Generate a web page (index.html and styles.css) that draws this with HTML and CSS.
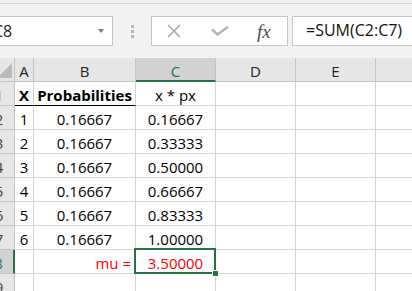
FILE: index.html
```html
<!DOCTYPE html>
<html lang="en">
<head>
    <meta charset="UTF-8">
    <meta name="viewport" content="width=device-width, initial-scale=1.0">
    <title>Book1 - Excel</title>
    <link rel="stylesheet" href="styles.css">
</head>
<body>

<div class="app">
    <div class="ribbon-edge"></div>

    <div class="formula-bar">
        <div class="name-box">
            <span class="name-text">C8</span>
            <span class="caret"></span>
        </div>
        <div class="grip">
            <span></span>
            <span></span>
            <span></span>
        </div>
        <div class="fx-buttons">
            <svg class="btn-icon" width="16" height="14" viewBox="0 0 16 14">
                <path d="M2 1 L14 13 M14 1 L2 13" stroke="#a9a9a9" stroke-width="1.6" fill="none"/>
            </svg>
            <svg class="btn-icon" width="18" height="10" viewBox="0 0 18 10">
                <path d="M1 3.5 L6.5 8.5 L17 0.8" stroke="#b3b3b3" stroke-width="2.4" fill="none"/>
            </svg>
            <span class="fx">fx</span>
        </div>
        <div class="formula-input">=SUM(C2:C7)</div>
    </div>

    <div class="sheet">
        <div class="corner"><span class="corner-tri"></span></div>
        <div class="col-head">A</div>
        <div class="col-head">B</div>
        <div class="col-head active">C</div>
        <div class="col-head">D</div>
        <div class="col-head">E</div>
        <div class="col-head"></div>

        <div class="row-head">1</div>
        <div class="cell bold title">X</div>
        <div class="cell bold title">Probabilities</div>
        <div class="cell">x * px</div>
        <div class="cell"></div>
        <div class="cell"></div>
        <div class="cell"></div>

        <div class="row-head">2</div>
        <div class="cell">1</div>
        <div class="cell">0.16667</div>
        <div class="cell">0.16667</div>
        <div class="cell"></div>
        <div class="cell"></div>
        <div class="cell"></div>

        <div class="row-head">3</div>
        <div class="cell">2</div>
        <div class="cell">0.16667</div>
        <div class="cell">0.33333</div>
        <div class="cell"></div>
        <div class="cell"></div>
        <div class="cell"></div>

        <div class="row-head">4</div>
        <div class="cell">3</div>
        <div class="cell">0.16667</div>
        <div class="cell">0.50000</div>
        <div class="cell"></div>
        <div class="cell"></div>
        <div class="cell"></div>

        <div class="row-head">5</div>
        <div class="cell">4</div>
        <div class="cell">0.16667</div>
        <div class="cell">0.66667</div>
        <div class="cell"></div>
        <div class="cell"></div>
        <div class="cell"></div>

        <div class="row-head">6</div>
        <div class="cell">5</div>
        <div class="cell">0.16667</div>
        <div class="cell">0.83333</div>
        <div class="cell"></div>
        <div class="cell"></div>
        <div class="cell"></div>

        <div class="row-head">7</div>
        <div class="cell">6</div>
        <div class="cell">0.16667</div>
        <div class="cell">1.00000</div>
        <div class="cell"></div>
        <div class="cell"></div>
        <div class="cell"></div>

        <div class="row-head active">8</div>
        <div class="cell"></div>
        <div class="cell red right">mu =</div>
        <div class="cell red selected">3.50000</div>
        <div class="cell"></div>
        <div class="cell"></div>
        <div class="cell"></div>

        <div class="row-head">9</div>
        <div class="cell"></div>
        <div class="cell"></div>
        <div class="cell"></div>
        <div class="cell"></div>
        <div class="cell"></div>
        <div class="cell"></div>
    </div>
</div>

</body>
</html>
```

FILE: styles.css
```css
body {
    margin: 0;
    font-family: "Open Sans", Arial, sans-serif;
    background: #fff;
}
.app {
    width: 412px;
    height: 291px;
    overflow: hidden;
    background: #f3f3f3;
}
.ribbon-edge {
    height: 3px;
    border-bottom: 1px solid #d6d6d6;
}

/* formula bar */
.formula-bar {
    display: flex;
    align-items: center;
    height: 30px;
    margin-top: 12px;
    margin-bottom: 12px;
}
.name-box {
    box-sizing: border-box;
    width: 127px;
    height: 30px;
    margin-left: -14px;
    padding: 0 8px 0 6px;
    background: #fff;
    border: 1px solid #c6c6c6;
    display: flex;
    align-items: center;
    justify-content: space-between;
    font-size: 16px;
    color: #222;
}
.caret {
    width: 0;
    height: 0;
    border-left: 3.5px solid transparent;
    border-right: 3.5px solid transparent;
    border-top: 4px solid #7a7a7a;
}
.grip {
    display: flex;
    flex-direction: column;
    gap: 2px;
    margin-left: 18px;
    margin-right: 17px;
}
.grip span {
    width: 3px;
    height: 3px;
    background: #b6b6b6;
}
.fx-buttons {
    box-sizing: border-box;
    width: 137px;
    height: 30px;
    background: #fff;
    border: 1px solid #c6c6c6;
    display: flex;
    align-items: center;
    padding-left: 14px;
}
.btn-icon {
    display: block;
}
.btn-icon + .btn-icon {
    margin-left: 29px;
}
.fx {
    margin-left: 28px;
    font-family: "Liberation Serif", serif;
    font-style: italic;
    font-size: 19px;
    color: #4a4a4a;
    line-height: 1;
}
.formula-input {
    box-sizing: border-box;
    flex: 1;
    height: 30px;
    margin-left: 4px;
    margin-right: -10px;
    padding-left: 13px;
    background: #fff;
    border: 1px solid #c6c6c6;
    font-size: 16px;
    line-height: 27px;
    color: #111;
}

/* grid */
.sheet {
    display: grid;
    grid-template-columns: 31px 19px 102px 80px 80px 80px 60px;
    grid-auto-rows: 24px;
    margin-left: -16px;
    background: #fff;
    font-size: 15px;
}
.sheet > div {
    box-sizing: border-box;
    border-right: 1px solid #d4d4d4;
    border-bottom: 1px solid #d4d4d4;
    line-height: 22px;
    padding-top: 2px;
    text-align: center;
    white-space: nowrap;
    color: #000;
}
.corner {
    position: relative;
    background: #e6e6e6;
    border-right-color: #c4c4c4 !important;
    border-bottom-color: #c4c4c4 !important;
}
.corner-tri {
    position: absolute;
    right: 2px;
    bottom: 3px;
    width: 0;
    height: 0;
    border-left: 15px solid transparent;
    border-bottom: 15px solid #b9b9b9;
}
.col-head {
    background: #e6e6e6;
    border-right-color: #c4c4c4 !important;
    border-bottom-color: #c4c4c4 !important;
    color: #222 !important;
}
.col-head.active {
    background: #d2d2d2;
    border-bottom: 2px solid #217346 !important;
    color: #217346 !important;
}
.row-head {
    background: #e6e6e6;
    border-right-color: #c4c4c4 !important;
    border-bottom-color: #c4c4c4 !important;
    color: #444 !important;
}
.row-head.active {
    background: #d2d2d2;
    border-right: 2px solid #217346 !important;
    color: #217346 !important;
}
.cell.bold {
    font-weight: 700;
}
.cell.title {
    border-bottom-color: #000;
}
.cell.right {
    text-align: right;
    padding-right: 4px;
}
.cell.red {
    color: #ff0000;
}
.cell.selected {
    position: relative;
}
.cell.selected::before {
    content: "";
    position: absolute;
    left: -2px;
    top: -2px;
    right: -1px;
    bottom: -1px;
    border: 2px solid #217346;
}
.cell.selected::after {
    content: "";
    position: absolute;
    right: -4px;
    bottom: -4px;
    width: 5px;
    height: 5px;
    background: #217346;
    border: 1px solid #fff;
}
```
